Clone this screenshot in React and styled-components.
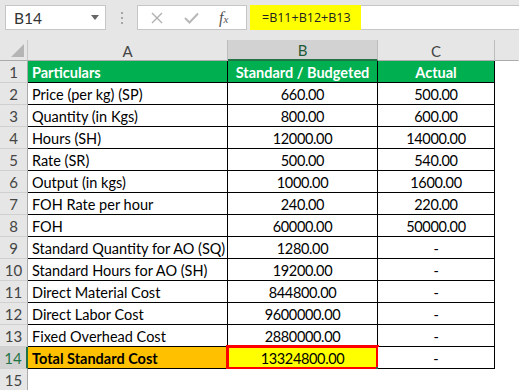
import React from "react";
import styled, { createGlobalStyle, css } from "styled-components";

const Global = createGlobalStyle`
  html, body { margin: 0; padding: 0; background: #fff; }
  body { font-family: Lato, "Open Sans", sans-serif; }
`;

const Page = styled.div`
  width: 519px;
  height: 390px;
  overflow: hidden;
  background: #fff;
`;

const TopBar = styled.div`
  height: 40px;
  box-sizing: border-box;
  background: #e6e6e6;
  display: flex;
  align-items: flex-start;
  padding: 5px 0 0 5px;
`;

const NameBox = styled.div`
  width: 101px;
  height: 25px;
  box-sizing: border-box;
  background: #fff;
  border: 1px solid #c6c6c6;
  display: flex;
  align-items: center;
  justify-content: space-between;
  padding: 0 6px 0 8px;
  font-family: Lato, sans-serif;
  font-size: 15.5px;
  color: #333;
`;

const Caret = styled.span`
  width: 0;
  height: 0;
  border-left: 4px solid transparent;
  border-right: 4px solid transparent;
  border-top: 5px solid #666;
`;

const Dots = styled.div`
  width: 31px;
  height: 25px;
  display: flex;
  flex-direction: column;
  align-items: center;
  justify-content: center;
  gap: 3px;
  & > span {
    width: 2px;
    height: 2px;
    background: #a6a6a6;
  }
`;

const FxBox = styled.div`
  width: 110px;
  height: 25px;
  box-sizing: border-box;
  background: #fff;
  border: 1px solid #c6c6c6;
  display: flex;
  align-items: center;
  padding-left: 13px;
  gap: 21px;
`;

const FxText = styled.span`
  font-family: "Liberation Serif", serif;
  font-style: italic;
  font-size: 16px;
  color: #555;
  margin-left: -1px;
  & > sub {
    font-size: 11px;
    vertical-align: 0;
  }
`;

const FormulaInput = styled.div`
  flex: 1;
  margin-left: 3px;
  height: 25px;
  box-sizing: border-box;
  background: #fff;
  border-top: 1px solid #c6c6c6;
  border-bottom: 1px solid #c6c6c6;
  display: flex;
`;

const FormulaHighlight = styled.div`
  width: 111px;
  height: 25px;
  margin-top: -1px;
  box-sizing: border-box;
  background: #ffff00;
  display: flex;
  align-items: center;
  padding-left: 12px;
  font-family: "Open Sans", sans-serif;
  font-size: 12.5px;
  color: #222;
`;

const Grid = styled.div`
  display: grid;
  grid-template-columns: 28px 200px 150px 117px 24px;
  grid-template-rows: 21px repeat(15, 22px);
`;

const Corner = styled.div`
  background: #e6e6e6;
  border-right: 1px solid #c6c6c6;
  border-bottom: 1px solid #ababab;
  box-sizing: border-box;
  position: relative;
  &::after {
    content: "";
    position: absolute;
    right: 3px;
    bottom: 3px;
    width: 13px;
    height: 13px;
    background: #b5b5b5;
    clip-path: polygon(100% 0, 100% 100%, 0 100%);
  }
`;

const ColHead = styled.div`
  box-sizing: border-box;
  background: ${(p) => (p.$sel ? "#d2d2d2" : "#e6e6e6")};
  border-right: 1px solid ${(p) => (p.$last ? "transparent" : "#bcbcbc")};
  border-bottom: ${(p) => (p.$sel ? "2px solid #217346" : "1px solid #ababab")};
  display: flex;
  align-items: center;
  justify-content: center;
  font-size: 15px;
  color: ${(p) => (p.$sel ? "#1f5a38" : "#444")};
  padding-top: 1px;
`;

const RowHead = styled.div`
  box-sizing: border-box;
  background: ${(p) => (p.$sel ? "#d2d2d2" : "#e6e6e6")};
  border-right: ${(p) => (p.$sel ? "2px solid #217346" : "1px solid #ababab")};
  border-bottom: 1px solid #d0d0d0;
  display: flex;
  align-items: center;
  justify-content: center;
  font-size: 15px;
  color: ${(p) => (p.$sel ? "#217346" : "#444")};
`;

const fills = {
  head: "#00b050",
  total: "#ffc000",
  sel: "#ffff00",
  none: "#fff",
};

const Cell = styled.div`
  box-sizing: border-box;
  position: relative;
  background: ${(p) => fills[p.$fill || "none"]};
  ${(p) =>
    p.$bordered &&
    css`
      border-right: 1px solid #000;
      border-bottom: 1px solid #000;
    `}
  display: flex;
  align-items: center;
  justify-content: ${(p) => (p.$center ? "center" : "flex-start")};
  padding: 1px 0 0 ${(p) => (p.$center ? "0" : "4px")};
  font-size: 14.5px;
  letter-spacing: ${(p) => (p.$num ? "-0.35px" : "0")};
  font-weight: ${(p) => (p.$bold ? 700 : 400)};
  color: ${(p) => (p.$fill === "head" ? "#fff" : "#000")};
  white-space: nowrap;
  overflow: visible;
`;

const SelBox = styled.div`
  position: absolute;
  left: -2px;
  top: -2px;
  right: -2px;
  bottom: -2px;
  border: 3px solid #ff0000;
  pointer-events: none;
  &::after {
    content: "";
    position: absolute;
    right: -4px;
    bottom: -4px;
    width: 4px;
    height: 4px;
    background: #217346;
  }
`;

const rows = [
  ["Price (per kg) (SP)", "660.00", "500.00"],
  ["Quantity (in Kgs)", "800.00", "600.00"],
  ["Hours (SH)", "12000.00", "14000.00"],
  ["Rate (SR)", "500.00", "540.00"],
  ["Output (in kgs)", "1000.00", "1600.00"],
  ["FOH Rate per hour", "240.00", "220.00"],
  ["FOH", "60000.00", "50000.00"],
  ["Standard Quantity for AO (SQ)", "1280.00", "-"],
  ["Standard Hours for AO (SH)", "19200.00", "-"],
  ["Direct Material Cost", "844800.00", "-"],
  ["Direct Labor Cost", "9600000.00", "-"],
  ["Fixed Overhead Cost", "2880000.00", "-"],
];

const XIcon = () => (
  <svg width="12" height="12" viewBox="0 0 12 12">
    <path d="M1 1 L11 11 M11 1 L1 11" stroke="#b0b0b0" strokeWidth="1.4" fill="none" />
  </svg>
);

const CheckIcon = () => (
  <svg width="15" height="12" viewBox="0 0 15 12">
    <path d="M1 6 L5.5 10.5 L14 1.5" stroke="#b8b8b8" strokeWidth="2" fill="none" />
  </svg>
);

export default function App() {
  return (
    <Page>
      <Global />
      <TopBar>
        <NameBox>
          B14
          <Caret />
        </NameBox>
        <Dots>
          <span />
          <span />
          <span />
        </Dots>
        <FxBox>
          <XIcon />
          <CheckIcon />
          <FxText>
            f<sub>x</sub>
          </FxText>
        </FxBox>
        <FormulaInput>
          <FormulaHighlight>=B11+B12+B13</FormulaHighlight>
        </FormulaInput>
      </TopBar>
      <Grid>
        <Corner />
        <ColHead>A</ColHead>
        <ColHead $sel>B</ColHead>
        <ColHead>C</ColHead>
        <ColHead $last />

        <RowHead>1</RowHead>
        <Cell $bordered $fill="head" $bold>Particulars</Cell>
        <Cell $bordered $fill="head" $bold $center>Standard / Budgeted</Cell>
        <Cell $bordered $fill="head" $bold $center>Actual</Cell>
        <Cell />

        {rows.map((r, i) => (
          <React.Fragment key={i}>
            <RowHead>{i + 2}</RowHead>
            <Cell $bordered>{r[0]}</Cell>
            <Cell $bordered $center $num>{r[1]}</Cell>
            <Cell $bordered $center $num>{r[2]}</Cell>
            <Cell />
          </React.Fragment>
        ))}

        <RowHead $sel>14</RowHead>
        <Cell $bordered $fill="total" $bold>Total Standard Cost</Cell>
        <Cell $bordered $fill="sel" $center $num>
          13324800.00
          <SelBox />
        </Cell>
        <Cell $bordered $center>-</Cell>
        <Cell />

        <RowHead>15</RowHead>
        <Cell />
        <Cell />
        <Cell />
        <Cell />
      </Grid>
    </Page>
  );
}
